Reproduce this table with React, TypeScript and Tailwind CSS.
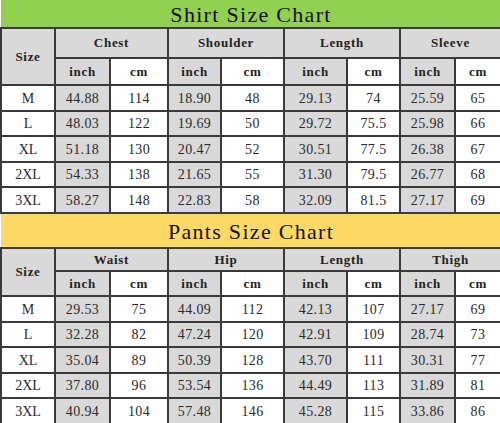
import React from "react";

type Row = [string, string, string, string, string, string, string, string, string];

const shirtRows: Row[] = [
  ["M", "44.88", "114", "18.90", "48", "29.13", "74", "25.59", "65"],
  ["L", "48.03", "122", "19.69", "50", "29.72", "75.5", "25.98", "66"],
  ["XL", "51.18", "130", "20.47", "52", "30.51", "77.5", "26.38", "67"],
  ["2XL", "54.33", "138", "21.65", "55", "31.30", "79.5", "26.77", "68"],
  ["3XL", "58.27", "148", "22.83", "58", "32.09", "81.5", "27.17", "69"],
];

const pantsRows: Row[] = [
  ["M", "29.53", "75", "44.09", "112", "42.13", "107", "27.17", "69"],
  ["L", "32.28", "82", "47.24", "120", "42.91", "109", "28.74", "73"],
  ["XL", "35.04", "89", "50.39", "128", "43.70", "111", "30.31", "77"],
  ["2XL", "37.80", "96", "53.54", "136", "44.49", "113", "31.89", "81"],
  ["3XL", "40.94", "104", "57.48", "146", "45.28", "115", "33.86", "86"],
];

const colClasses = [
  "w-[54px]",
  "w-[55px]",
  "w-[58px]",
  "w-[53px]",
  "w-[63px]",
  "w-[63px]",
  "w-[53px]",
  "w-[55px]",
  "w-[46px]",
];

const head =
  "border-2 border-[#3a3a3a] text-center font-bold text-[13px] tracking-[0.7px] text-[#222] p-0 font-['Liberation_Serif','Times_New_Roman',serif]";

function SizeTable({
  title,
  titleClass,
  h1,
  h2,
  groups,
  rows,
}: {
  title: string;
  titleClass: string;
  h1: string;
  h2: string;
  groups: string[];
  rows: Row[];
}) {
  const rowHs = ["h-[26px]", "h-[25px]", "h-[26px]", "h-[25px]", "h-[26px]"];
  return (
    <table className="border-collapse table-fixed w-[500px]">
      <colgroup>
        {colClasses.map((c, i) => (
          <col key={i} className={c} />
        ))}
      </colgroup>
      <tbody>
        <tr className={titleClass}>
          <td
            colSpan={9}
            className="text-center text-[22px] tracking-[1.3px] text-[#111] border-b-2 border-[#3a3a3a] p-0 pt-[2px] leading-none font-['Liberation_Serif','Times_New_Roman',serif]"
          >
            {title}
          </td>
        </tr>
        <tr className={h1}>
          <td rowSpan={2} className={`${head} bg-[#d9d9d9]`}>
            Size
          </td>
          {groups.map((g) => (
            <td key={g} colSpan={2} className={`${head} bg-[#d9d9d9]`}>
              {g}
            </td>
          ))}
        </tr>
        <tr className={h2}>
          {groups.map((g) => (
            <React.Fragment key={g}>
              <td className={`${head} bg-[#d9d9d9]`}>inch</td>
              <td className={`${head} bg-white`}>cm</td>
            </React.Fragment>
          ))}
        </tr>
        {rows.map((r, ri) => (
          <tr key={ri} className={rowHs[ri]}>
            {r.map((c, ci) =>
              ci === 0 ? (
                <td
                  key={ci}
                  className="bg-white border-2 border-[#3a3a3a] text-center text-[#2a2a2a] p-0 text-[14px] font-['Liberation_Serif','Times_New_Roman',serif]"
                >
                  {c}
                </td>
              ) : (
                <td
                  key={ci}
                  className={`${
                    ci % 2 === 1 ? "bg-[#d9d9d9]" : "bg-white"
                  } border-2 border-[#3a3a3a] text-center text-[#2a2a2a] p-0 text-[14px] tracking-[0.4px] font-['Liberation_Serif','Times_New_Roman',serif]`}
                >
                  {c}
                </td>
              )
            )}
          </tr>
        ))}
      </tbody>
    </table>
  );
}

export default function App() {
  return (
    <div className="w-[500px] h-[423px] overflow-hidden bg-white flex flex-col">
      <SizeTable
        title="Shirt Size Chart"
        titleClass="h-[28px] bg-[#92d050]"
        h1="h-[30px]"
        h2="h-[27px]"
        groups={["Chest", "Shoulder", "Length", "Sleeve"]}
        rows={shirtRows}
      />
      <SizeTable
        title="Pants Size Chart"
        titleClass="h-[34px] bg-[#ffd966]"
        h1="h-[23px]"
        h2="h-[25px]"
        groups={["Waist", "Hip", "Length", "Thigh"]}
        rows={pantsRows}
      />
    </div>
  );
}
